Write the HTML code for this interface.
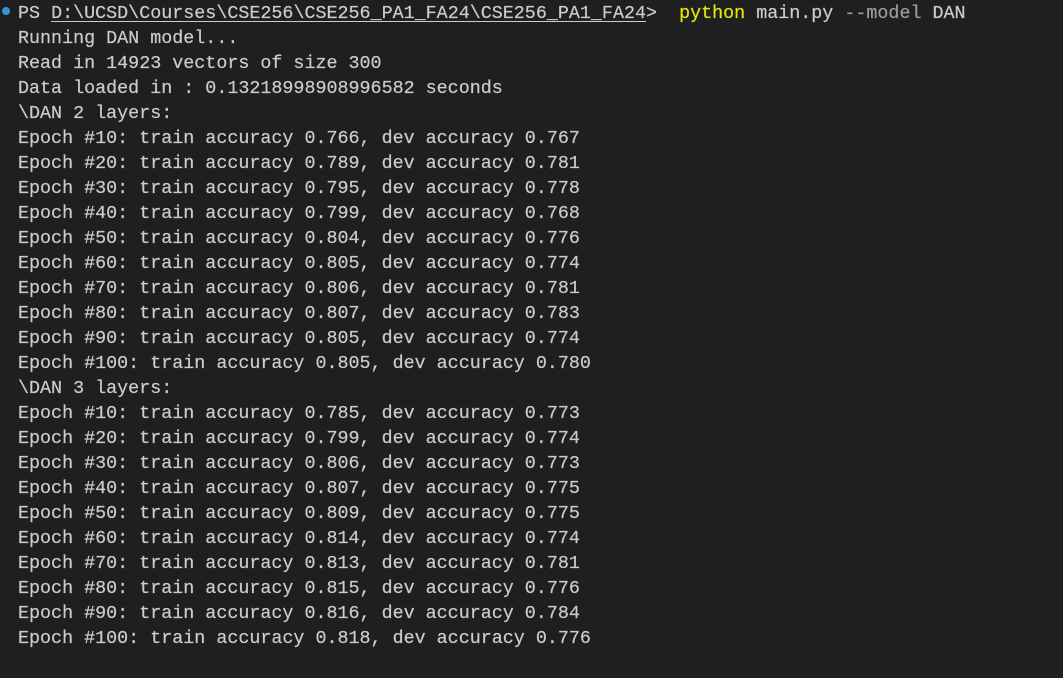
<!DOCTYPE html>
<html><head><meta charset="utf-8"><style>
html,body{margin:0;padding:0;background:#1f1f1f;width:1063px;height:678px;overflow:hidden}
pre{margin:0;position:absolute;left:18px;top:1px;font-family:"Liberation Mono",monospace;font-size:18.38px;line-height:25px;color:#cccccc;white-space:pre;-webkit-text-stroke:0.2px #cccccc}
.dot{position:absolute;left:2px;top:7px;width:8px;height:8px;border-radius:50%;background:#3794d4}
.u{text-decoration:underline;text-underline-offset:3px}
.y{color:#e5e510;-webkit-text-stroke:0.2px #e5e510}.g{color:#9d9d9d;-webkit-text-stroke:0.2px #9d9d9d}
</style></head><body>
<div class="dot"></div>
<pre>PS <span class="u">D:\UCSD\Courses\CSE256\CSE256_PA1_FA24\CSE256_PA1_FA24</span>>  <span class="y">python</span> main.py <span class="g">--model</span> DAN
Running DAN model...
Read in 14923 vectors of size 300
Data loaded in : 0.13218998908996582 seconds
\DAN 2 layers:
Epoch #10: train accuracy 0.766, dev accuracy 0.767
Epoch #20: train accuracy 0.789, dev accuracy 0.781
Epoch #30: train accuracy 0.795, dev accuracy 0.778
Epoch #40: train accuracy 0.799, dev accuracy 0.768
Epoch #50: train accuracy 0.804, dev accuracy 0.776
Epoch #60: train accuracy 0.805, dev accuracy 0.774
Epoch #70: train accuracy 0.806, dev accuracy 0.781
Epoch #80: train accuracy 0.807, dev accuracy 0.783
Epoch #90: train accuracy 0.805, dev accuracy 0.774
Epoch #100: train accuracy 0.805, dev accuracy 0.780
\DAN 3 layers:
Epoch #10: train accuracy 0.785, dev accuracy 0.773
Epoch #20: train accuracy 0.799, dev accuracy 0.774
Epoch #30: train accuracy 0.806, dev accuracy 0.773
Epoch #40: train accuracy 0.807, dev accuracy 0.775
Epoch #50: train accuracy 0.809, dev accuracy 0.775
Epoch #60: train accuracy 0.814, dev accuracy 0.774
Epoch #70: train accuracy 0.813, dev accuracy 0.781
Epoch #80: train accuracy 0.815, dev accuracy 0.776
Epoch #90: train accuracy 0.816, dev accuracy 0.784
Epoch #100: train accuracy 0.818, dev accuracy 0.776</pre>
</body></html>
